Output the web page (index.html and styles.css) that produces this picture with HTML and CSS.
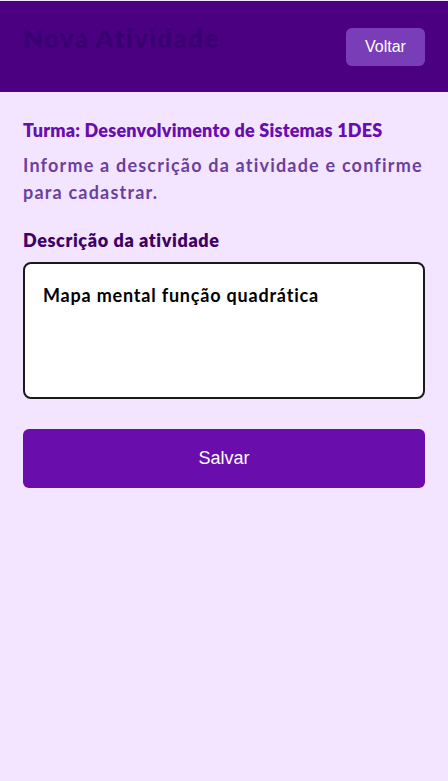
FILE: index.html
```html
<!DOCTYPE html>
<html lang="pt-BR">
<head>
<meta charset="utf-8">
<title>Nova Atividade</title>
<link rel="stylesheet" href="styles.css">
</head>
<body>
<header class="topbar">
  <h1 class="title">Nova Atividade</h1>
  <button class="back-btn" type="button">Voltar</button>
</header>
<main class="content">
  <h2 class="turma">Turma: Desenvolvimento de Sistemas 1DES</h2>
  <p class="hint">Informe a descrição da atividade e confirme para cadastrar.</p>
  <label class="label" for="desc">Descrição da atividade</label>
  <textarea id="desc" class="desc">Mapa mental função quadrática</textarea>
  <button class="save-btn" type="button">Salvar</button>
</main>
</body>
</html>
```

FILE: styles.css
```css
* { box-sizing: border-box; }
html, body { margin: 0; padding: 0; }
body {
  background: #f3e5ff;
  font-family: Lato, "Open Sans", sans-serif;
  min-height: 781px;
  border-top: 1px solid #f3e5ff;
}
.topbar {
  background: #4b0082;
  height: 91px;
  padding: 27px 23px 0 23px;
  display: flex;
  justify-content: space-between;
  align-items: flex-start;
}
.title {
  margin: -3px 0 0 0;
  font-size: 26px;
  font-weight: 800;
  color: #3a0071;
  letter-spacing: 1.2px;
  line-height: 26px;
}
.back-btn {
  background: #7a3db8;
  color: #fff;
  border: none;
  border-radius: 6px;
  width: 79px;
  height: 38px;
  font-family: "Liberation Sans", Arial, sans-serif;
  font-size: 16px;
}
.content {
  padding: 26px 23px 0 23px;
  display: flex;
  flex-direction: column;
}
.turma {
  margin: 0;
  font-size: 18px;
  font-weight: 800;
  color: #6a0dad;
  letter-spacing: 0.2px;
  line-height: 24px;
}
.hint {
  margin: 10px 0 0 0;
  font-size: 18px;
  font-weight: 700;
  color: #6b3fa0;
  letter-spacing: 1.2px;
  line-height: 27px;
}
.label {
  margin-top: 22px;
  font-size: 18px;
  font-weight: 800;
  color: #3d0066;
  letter-spacing: 0.6px;
  line-height: 24px;
}
.desc {
  margin-top: 10px;
  height: 137px;
  border: 2px solid #1a1a1a;
  border-radius: 8px;
  background: #fff;
  padding: 19px 18px;
  font-family: Lato, "Open Sans", sans-serif;
  font-size: 18px;
  font-weight: 700;
  color: #000;
  letter-spacing: 0.8px;
  resize: none;
  line-height: 24px;
}
.save-btn {
  margin-top: 30px;
  height: 59px;
  background: #6a0dad;
  color: #fff;
  border: none;
  border-radius: 6px;
  font-family: "Liberation Sans", Arial, sans-serif;
  font-size: 18px;
}
```
